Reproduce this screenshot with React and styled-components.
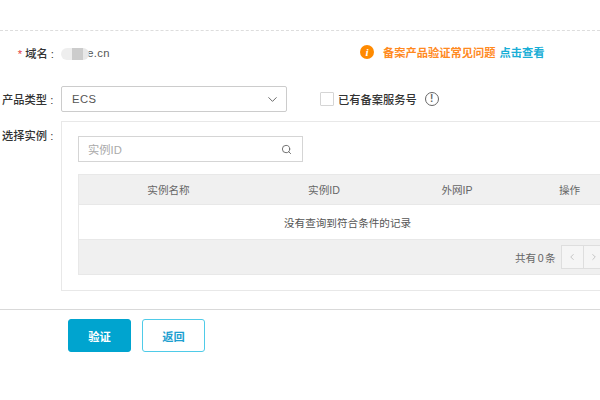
import React from 'react';
import styled, { createGlobalStyle } from 'styled-components';
import { ChevronDown, ChevronLeft, ChevronRight, Search } from 'lucide-react';

const GlobalStyle = createGlobalStyle`
  html, body {
    margin: 0;
    background: #fff;
    overflow: hidden;
  }
  body {
    font-family: "Liberation Sans", "Noto Sans CJK SC", sans-serif;
    color: #444;
    font-size: 11.25px;
  }
`;

const Page = styled.div`
  width: 600px;
  height: 400px;
  overflow: hidden;
  padding-top: 30px;
  box-sizing: border-box;
`;

const Form = styled.div`
  border-top: 1px dashed #ddd;
  border-bottom: 1px solid #d9d9d9;
  height: 280px;
  box-sizing: border-box;
  padding-top: 12px;
  width: 600px;
`;

const Row = styled.div`
  display: flex;
  align-items: ${p => p.$align || 'center'};
  height: ${p => p.$height}px;
  margin-bottom: ${p => p.$gap || 0}px;
`;

const Label = styled.div`
  width: 61px;
  flex: none;
  box-sizing: border-box;
  padding-left: 2px;
  text-align: ${p => (p.$right ? 'right' : 'left')};
  padding-right: ${p => (p.$right ? 7 : 0)}px;
  color: #333;
  font-weight: 500;
  margin-top: ${p => p.$top || 0}px;
  white-space: nowrap;
`;

const Star = styled.span`
  color: #e4393c;
  margin-right: 3px;
`;

const Domain = styled.div`
  position: relative;
  width: 49px;
  text-align: right;
  letter-spacing: 0.4px;
  color: #555;
`;

const Redacted = styled.span`
  position: absolute;
  left: 0;
  top: 1px;
  width: 28px;
  height: 12px;
  border-radius: 6px;
  background: linear-gradient(90deg, #eee 0 40%, #ccc 40% 80%, #e8e8e8 80%);
  filter: blur(0.6px);
`;

const Notice = styled.div`
  display: flex;
  align-items: center;
  margin-left: 250px;
  font-weight: 700;
  color: #ff8a1f;
  margin-top: -2px;
`;

const InfoBadge = styled.span`
  width: 14px;
  height: 14px;
  border-radius: 50%;
  background: #ff8a00;
  color: #fff;
  font: italic 700 11px/14px "Liberation Serif", serif;
  text-align: center;
  margin-right: 9px;
`;

const NoticeLink = styled.span`
  color: #19aed6;
  margin-left: 4px;
`;

const Select = styled.div`
  width: 226px;
  height: 26px;
  box-sizing: border-box;
  border: 1px solid #ccc;
  border-radius: 2px;
  display: flex;
  align-items: center;
  justify-content: space-between;
  padding: 0 6px 0 10px;
  letter-spacing: 0.4px;
  color: #555;
`;

const CheckWrap = styled.label`
  display: flex;
  align-items: center;
  margin-left: 33px;
  color: #333;
  font-weight: 500;
`;

const Checkbox = styled.span`
  width: 12px;
  height: 12px;
  border: 1px solid #d5d5d5;
  margin-right: 4px;
  border-radius: 1px;
`;

const Tip = styled.span`
  width: 12px;
  height: 12px;
  border: 1px solid #666;
  border-radius: 50%;
  margin-left: 8px;
  margin-top: -1px;
  color: #666;
  font: 700 10px/12px "Liberation Sans", sans-serif;
  text-align: center;
`;

const Panel = styled.div`
  width: 600px;
  height: 170px;
  flex: none;
  box-sizing: border-box;
  border: 1px solid #e8e8e8;
  padding: 14px 16px;
`;

const SearchBox = styled.div`
  width: 225px;
  height: 26px;
  box-sizing: border-box;
  border: 1px solid #d5d5d5;
  display: flex;
  align-items: center;
  justify-content: space-between;
  padding: 0 10px 0 9px;
  color: #aaa;
  margin-bottom: 12px;
`;

const SearchIcon = styled(Search)`
  color: #666;
`;

const Table = styled.div`
  border: 1px solid #e8e8e8;
  border-width: 1px 0 1px 1px;
  width: 536px;
  font-size: 10.6px;
  color: #666;
`;

const HeadRow = styled.div`
  display: grid;
  grid-template-columns: 179px 132px 134px 1fr;
  height: 29px;
  align-items: center;
  background: #f0f0f0;
  border-bottom: 1px solid #e8e8e8;
  text-align: center;
`;

const EmptyRow = styled.div`
  height: 34px;
  display: flex;
  align-items: center;
  padding-left: 205px;
  border-bottom: 1px solid #e8e8e8;
  color: #555;
`;

const Footer = styled.div`
  height: 34px;
  background: #f0f0f0;
  display: flex;
  align-items: center;
  padding-left: 436px;
  word-spacing: -1.5px;
`;

const Pager = styled.div`
  display: flex;
  margin-left: 5px;
  border: 1px solid #dedede;
  height: 22px;
`;

const PagerButton = styled.span`
  width: 21px;
  display: flex;
  align-items: center;
  justify-content: center;
  color: #bbb;
  background: #f5f5f5;
  & + & {
    border-left: 1px solid #dedede;
  }
`;

const Actions = styled.div`
  display: flex;
  gap: 11px;
  padding: 9px 0 0 68px;
`;

const Button = styled.button`
  width: 63px;
  height: 33px;
  box-sizing: border-box;
  border-radius: 3px;
  border: 1px solid ${p => (p.$primary ? '#00a4cf' : '#4fcbe8')};
  background: ${p => (p.$primary ? '#00a4cf' : '#fff')};
  color: ${p => (p.$primary ? '#fff' : '#1e9fd0')};
  font-family: inherit;
  font-size: 11.25px;
  font-weight: 700;
  padding: 0;
`;

const App = () => (
  <Page>
    <GlobalStyle />
    <Form>
      <Row $height={20} $gap={23}>
        <Label $right><Star>*</Star>域名 :</Label>
        <Domain><Redacted />e.cn</Domain>
        <Notice>
          <InfoBadge>i</InfoBadge>
          备案产品验证常见问题
          <NoticeLink>点击查看</NoticeLink>
        </Notice>
      </Row>
      <Row $height={26} $gap={9}>
        <Label>产品类型 :</Label>
        <Select>
          ECS
          <ChevronDown size={15} color="#555" strokeWidth={1.4} />
        </Select>
        <CheckWrap>
          <Checkbox />
          已有备案服务号
          <Tip>!</Tip>
        </CheckWrap>
      </Row>
      <Row $height={170} $align="flex-start">
        <Label $top={6}>选择实例 :</Label>
        <Panel>
          <SearchBox>
            实例ID
            <SearchIcon size={11} strokeWidth={2} />
          </SearchBox>
          <Table>
            <HeadRow>
              <div>实例名称</div>
              <div>实例ID</div>
              <div>外网IP</div>
              <div>操作</div>
            </HeadRow>
            <EmptyRow>没有查询到符合条件的记录</EmptyRow>
            <Footer>
              共有 0 条
              <Pager>
                <PagerButton><ChevronLeft size={10} /></PagerButton>
                <PagerButton><ChevronRight size={10} /></PagerButton>
              </Pager>
            </Footer>
          </Table>
        </Panel>
      </Row>
    </Form>
    <Actions>
      <Button $primary>验证</Button>
      <Button>返回</Button>
    </Actions>
  </Page>
);

export default App;
